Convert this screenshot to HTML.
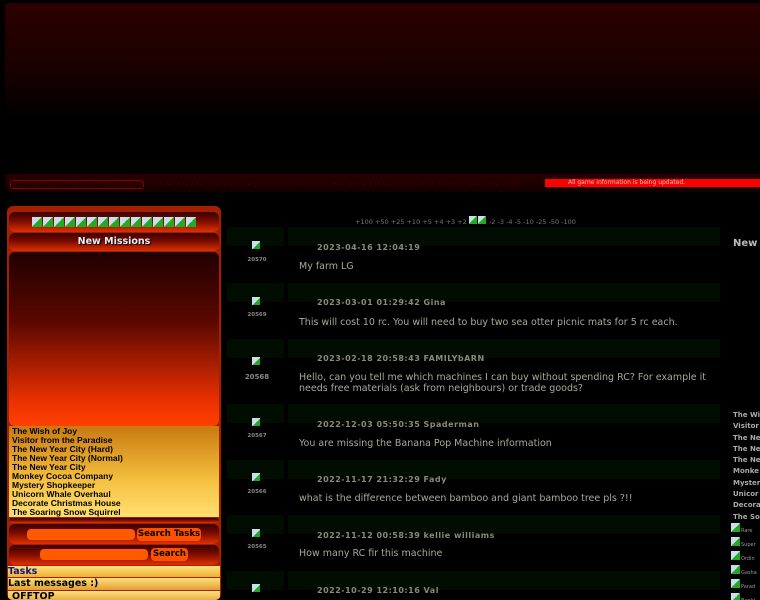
<!DOCTYPE html>
<html><head><meta charset="utf-8"><style>
*{margin:0;padding:0;box-sizing:border-box}
html,body{width:760px;height:600px;overflow:hidden}
body{background:#000;font-family:"DejaVu Sans","Liberation Sans",sans-serif;position:relative}
.abs{position:absolute}
.hdr{left:5px;top:3px;width:760px;height:166px;background:linear-gradient(#2c0000,#1a0000 40%,#000 70%);border-radius:4px}
.stat{left:5px;top:174px;width:760px;height:18px;background:linear-gradient(#2a0000,#120000);border-radius:4px}
.side{left:7px;top:206px;width:214px;height:394px;background:#a52000;border-radius:6px;overflow:hidden}
.bar{position:absolute;left:2px;width:210px;border-radius:6px;background:linear-gradient(#3a0000,#7a0c00 45%,#e03000);}
.ico{display:inline-block;width:10px;height:10px;background:linear-gradient(135deg,#cde 50%,#2a2 50%);margin-right:1px}
.ph{position:absolute;left:227px;width:493px;height:19px}
.ph .a{position:absolute;left:0;top:0;width:57px;height:19px;background:#020d02}
.ph .b{position:absolute;left:61px;top:0;width:432px;height:19px;background:#020d02}
.dt{position:absolute;left:317px;font-size:8px;color:#8a8a78;letter-spacing:.5px;font-weight:bold}
.tx{position:absolute;left:299px;font-size:9.5px;color:#a8a898;line-height:11px;width:420px}
.im{position:absolute;left:252px;width:8px;height:8px;background:linear-gradient(135deg,#cde 55%,#2a2 55%)}
.id{position:absolute;left:240px;width:34px;text-align:center;font-size:5.5px;color:#888;font-weight:bold}
.ml{position:absolute;left:12px;font-family:"Liberation Sans",sans-serif;font-size:8.5px;font-weight:bold;color:#000;line-height:9px;white-space:nowrap}
.rl{position:absolute;left:733px;width:27px;overflow:hidden;white-space:nowrap;font-size:7px;font-weight:bold;color:#aaa;line-height:11.3px}
</style></head><body>
<div class="abs hdr"></div>
<div class="abs stat"></div>
<div class="abs" style="left:10px;top:180px;width:134px;height:9px;border:1px solid #800;border-radius:3px;background:#200;font-size:6px;color:#300;font-weight:bold;line-height:7px;padding-left:2px;white-space:nowrap;overflow:hidden">255 users online (preview unavailable)</div>
<div class="abs" style="left:150px;top:180px;font-size:6.5px;color:#3a0000;white-space:nowrap">Visit 92 842 182. Thank you very much, 8.25mil views. Max online 1462 2022-12-18 00:10:00 — Today 332 11:50</div>
<div class="abs" style="left:545px;top:179px;width:215px;height:8px;background:#f00;font-size:6px;color:#fbb;line-height:8px;padding-left:23px">All game information is being updated.</div>

<div class="abs side">
 <div class="bar" style="top:6px;height:20px;text-align:center;padding-top:5px;line-height:10px"><span class="ico"></span><span class="ico"></span><span class="ico"></span><span class="ico"></span><span class="ico"></span><span class="ico"></span><span class="ico"></span><span class="ico"></span><span class="ico"></span><span class="ico"></span><span class="ico"></span><span class="ico"></span><span class="ico"></span><span class="ico"></span><span class="ico"></span></div>
 <div class="bar" style="top:27px;height:18px;text-align:center;color:#eee;font-size:9.5px;font-weight:bold;line-height:18px;text-shadow:1px 1px 1px #000">New Missions</div>
 <div style="position:absolute;left:2px;top:46px;width:210px;height:174px;border-radius:6px;background:linear-gradient(#200000,#5a0800 40%,#e83000 85%,#ff4000)"></div>
 <div style="position:absolute;left:2px;top:220px;width:210px;height:91px;background:linear-gradient(#c87a10,#f5c040 60%,#ffe070)"></div>
 <div class="bar" style="top:312px;height:5px"></div>
 <div class="bar" style="top:318px;height:20px"></div>
 <div style="position:absolute;left:20px;top:323px;width:108px;height:11px;border-radius:4px;background:#ff5a00"></div>
 <div style="position:absolute;left:130px;top:322px;width:64px;height:13px;border-radius:4px;background:#ff5000;font-size:8.5px;font-weight:bold;line-height:13px;text-align:center">Search Tasks</div>
 <div class="bar" style="top:339px;height:20px"></div>
 <div style="position:absolute;left:33px;top:343px;width:108px;height:11px;border-radius:4px;background:#ff5a00"></div>
 <div style="position:absolute;left:144px;top:342px;width:37px;height:13px;border-radius:4px;background:#ff5000;font-size:8.5px;font-weight:bold;line-height:13px;text-align:center">Search</div>
 <div style="position:absolute;left:1px;top:360px;width:212px;height:11px;background:linear-gradient(#ffe080,#f0b030);font-size:9.5px;font-weight:bold;color:#118;line-height:11px">Tasks</div>
 <div style="position:absolute;left:1px;top:372px;width:212px;height:12px;background:linear-gradient(#ffe080,#e0a030);font-size:9.5px;font-weight:bold;color:#000;line-height:12px">Last messages :)</div>
 <div style="position:absolute;left:1px;top:385px;width:212px;height:12px;background:linear-gradient(#ffe080,#e0a030);font-size:9.5px;font-weight:bold;color:#000;line-height:12px;padding-left:4px">OFFTOP</div>
</div>
<div class="ml" style="top:427px">The Wish of Joy<br>Visitor from the Paradise<br>The New Year City (Hard)<br>The New Year City (Normal)<br>The New Year City<br>Monkey Cocoa Company<br>Mystery Shopkeeper<br>Unicorn Whale Overhaul<br>Decorate Christmas House<br>The Soaring Snow Squirrel</div>

<div class="abs" style="left:355px;top:216px;font-size:6.5px;color:#777;white-space:nowrap">+100 +50 +25 +10 +5 +4 +3 +2 <span class="ico" style="width:8px;height:8px"></span><span class="ico" style="width:8px;height:8px"></span> -2 -3 -4 -5 -10 -25 -50 -100</div>
<div class="abs" style="left:733px;top:238px;font-size:10px;color:#bbb;font-weight:bold">New</div>

<div class="ph" style="top:227px"><div class="a"></div><div class="b"></div></div>
<div class="im" style="top:241px"></div><div class="id" style="top:257px">20570</div>
<div class="dt" style="top:243px">2023-04-16 12:04:19</div>
<div class="tx" style="top:261px">My farm LG</div>

<div class="ph" style="top:283px"><div class="a"></div><div class="b"></div></div>
<div class="im" style="top:297px"></div><div class="id" style="top:312px">20569</div>
<div class="dt" style="top:298px">2023-03-01 01:29:42 Gina</div>
<div class="tx" style="top:317px">This will cost 10 rc. You will need to buy two sea otter picnic mats for 5 rc each.</div>

<div class="ph" style="top:339px"><div class="a"></div><div class="b"></div></div>
<div class="im" style="top:357px"></div><div class="id" style="top:373px;font-size:7px">20568</div>
<div class="dt" style="top:354px">2023-02-18 20:58:43 FAMILYbARN</div>
<div class="tx" style="top:372px">Hello, can you tell me which machines I can buy without spending RC? For example it needs free materials (ask from neighbours) or trade goods?</div>

<div class="ph" style="top:404px"><div class="a"></div><div class="b"></div></div>
<div class="im" style="top:418px"></div><div class="id" style="top:433px">20567</div>
<div class="dt" style="top:420px">2022-12-03 05:50:35 Spaderman</div>
<div class="tx" style="top:438px">You are missing the Banana Pop Machine information</div>

<div class="ph" style="top:460px"><div class="a"></div><div class="b"></div></div>
<div class="im" style="top:473px"></div><div class="id" style="top:489px">20566</div>
<div class="dt" style="top:475px">2022-11-17 21:32:29 Fady</div>
<div class="tx" style="top:493px">what is the difference between bamboo and giant bamboo tree pls ?!!</div>

<div class="ph" style="top:515px"><div class="a"></div><div class="b"></div></div>
<div class="im" style="top:529px"></div><div class="id" style="top:544px">20565</div>
<div class="dt" style="top:531px">2022-11-12 00:58:39 kellie williams</div>
<div class="tx" style="top:548px">How many RC fir this machine</div>

<div class="ph" style="top:571px"><div class="a"></div><div class="b"></div></div>
<div class="im" style="top:584px"></div>
<div class="dt" style="top:586px">2022-10-29 12:10:16 Val</div>

<div class="rl" style="top:410px">The Wish<br>Visitor<br>The Ne<br>The Ne<br>The Ne<br>Monke<br>Myster<br>Unicor<br>Decora<br>The So</div>
<div class="abs" style="left:731px;top:523px;width:29px;overflow:hidden;white-space:nowrap;font-size:5px;color:#999;line-height:11px">
<span class="ico" style="width:9px;height:9px"></span>Rare<br><span class="ico" style="width:9px;height:9px"></span>Super<br><span class="ico" style="width:9px;height:9px"></span>Ordin<br><span class="ico" style="width:9px;height:9px"></span>Gasha<br><span class="ico" style="width:9px;height:9px"></span>Parad<br><span class="ico" style="width:9px;height:9px"></span>Banki<br><span class="ico" style="width:9px;height:9px"></span>Fallin</div>
</body></html>
